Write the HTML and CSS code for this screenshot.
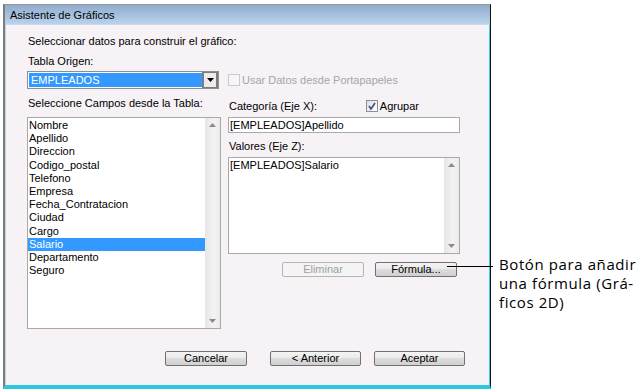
FILE: index.html
```html
<!DOCTYPE html>
<html lang="es">
<head>
  <meta charset="UTF-8" />
  <title>Asistente de Gráficos</title>
  <link rel="stylesheet" href="styles.css">
</head>
<body>
  <div class="stage">
    <div class="window">
      <div class="titlebar">Asistente de Gráficos</div>
      <div class="content">
        <p class="lbl intro">Seleccionar datos para construir el gráfico:</p>
        <p class="lbl origin">Tabla Origen:</p>
        <div class="source-row">
          <div class="combo">
            <span class="combo-value">EMPLEADOS</span>
            <span class="combo-btn">
              <svg width="7" height="4" viewBox="0 0 7 4"><path d="M0 0h7L3.5 4z" fill="#000"/></svg>
            </span>
          </div>
          <label class="check disabled"><span class="box"></span>Usar Datos desde Portapapeles</label>
        </div>

        <div class="main">
          <div class="col-left">
            <p class="lbl">Seleccione Campos desde la Tabla:</p>
            <div class="listbox fields">
              <ul class="items">
                <li>Nombre</li>
                <li>Apellido</li>
                <li>Direccion</li>
                <li>Codigo_postal</li>
                <li>Telefono</li>
                <li>Empresa</li>
                <li>Fecha_Contratacion</li>
                <li>Ciudad</li>
                <li>Cargo</li>
                <li class="selected">Salario</li>
                <li>Departamento</li>
                <li>Seguro</li>
              </ul>
              <div class="vscroll">
                <svg width="7" height="4" viewBox="0 0 7 4"><path d="M0 4h7L3.5 0z" fill="#8a8a8a"/></svg>
                <svg width="7" height="4" viewBox="0 0 7 4"><path d="M0 0h7L3.5 4z" fill="#8a8a8a"/></svg>
              </div>
            </div>
          </div>

          <div class="col-right">
            <div class="cat-row">
              <span class="lbl">Categoría (Eje X):</span>
              <label class="check">
                <span class="box checked">
                  <svg width="10" height="10" viewBox="0 0 10 10"><path d="M2 5l2 3 4-6" fill="none" stroke="#3b4f8c" stroke-width="1.6"/></svg>
                </span>Agrupar
              </label>
            </div>
            <div class="textbox">[EMPLEADOS]Apellido</div>
            <p class="lbl values-lbl">Valores (Eje Z):</p>
            <div class="listbox values">
              <ul class="items">
                <li>[EMPLEADOS]Salario</li>
              </ul>
              <div class="vscroll">
                <svg width="7" height="4" viewBox="0 0 7 4"><path d="M0 4h7L3.5 0z" fill="#8a8a8a"/></svg>
                <svg width="7" height="4" viewBox="0 0 7 4"><path d="M0 0h7L3.5 4z" fill="#8a8a8a"/></svg>
              </div>
            </div>
            <div class="btn-row">
              <button class="btn" disabled>Eliminar</button>
              <button class="btn formula">Fórmula...</button>
            </div>
          </div>
        </div>

        <div class="footer-btns">
          <button class="btn small">Cancelar</button>
          <button class="btn">&lt; Anterior</button>
          <button class="btn">Aceptar</button>
        </div>
      </div>
    </div>

    <p class="callout">Botón para añadir<br>una fórmula (Grá-<br>ficos 2D)</p>
    <div class="leader"></div>
  </div>
</body>
</html>
```

FILE: styles.css
```css
* {
  box-sizing: border-box;
}

body {
  margin: 0;
  background: #fff;
  font-family: 'Liberation Sans', Arial, sans-serif;
  font-size: 11px;
  color: #000;
}

p {
  margin: 0;
}

.stage {
  position: relative;
  display: flex;
  align-items: flex-start;
  width: 642px;
  height: 389px;
  overflow: hidden;
}

.window {
  width: 488px;
  height: 385px;
  margin: 4px 0 0 3px;
  background: #f6f2f5;
  border-top: 1px solid #9a9a9a;
  border-left: 2px solid #7c7c7c;
  border-right: 1px solid #111;
  border-bottom: 4px solid #2cc8e2;
  box-shadow: inset 1px 0 #bcd4f0, inset -1px 0 #3dd0e8;
}

.titlebar {
  height: 20px;
  line-height: 20px;
  padding-left: 5px;
  font-size: 11px;
  background: linear-gradient(#8fadce, #bad2eb);
  border-bottom: 1px solid #c9d9ea;
}

.content {
  padding: 10px 0 0 22px;
}

.lbl {
  line-height: 13px;
  padding-left: 1px;
}

.origin {
  margin-top: 7px;
}

.source-row {
  display: flex;
  align-items: center;
  gap: 9px;
  margin-top: 3px;
}

.combo {
  display: flex;
  width: 192px;
  height: 18px;
  border: 1px solid #8e8f8f;
  background: #fff;
}

.combo-value {
  flex: 1;
  margin: 1px 0 1px 1px;
  padding-left: 2px;
  line-height: 14px;
  background: #3399ff;
  color: #fff;
}

.combo-btn {
  width: 16px;
  display: flex;
  align-items: center;
  justify-content: center;
  background: #ececec;
  border: 2px solid #7d7d7d;
  border-top-width: 1px;
  border-bottom-width: 1px;
}

.check {
  display: flex;
  align-items: center;
  gap: 2px;
}

.check .box {
  width: 12px;
  height: 12px;
  border: 1px solid #8f8f8f;
  background: linear-gradient(135deg, #dcdcdc, #fff);
  display: flex;
  align-items: center;
  justify-content: center;
}

.check.disabled {
  color: #a6a6a6;
}

.check.disabled .box {
  border-color: #cacaca;
  background: #f6f6f6;
}

.main {
  display: grid;
  grid-template-columns: 194px 232px;
  column-gap: 7px;
  margin-top: 8px;
}

.listbox {
  display: flex;
  background: #fff;
  border: 1px solid #a9a9a9;
}

.fields {
  height: 212px;
  margin-top: 7px;
}

.items {
  flex: 1;
  list-style: none;
  margin: 0;
  padding: 1px 0 0;
}

.items li {
  height: 13.2px;
  line-height: 13px;
  padding-left: 1px;
}

.items li.selected {
  background: #3399ff;
  color: #fff;
}

.vscroll {
  width: 15px;
  display: flex;
  flex-direction: column;
  align-items: center;
  justify-content: space-between;
  padding: 5px 0 5px;
  background: linear-gradient(to right, #e6e6e6, #f3f3f3 60%, #ebebeb);
}

.cat-row {
  display: flex;
  align-items: flex-start;
  justify-content: space-between;
  height: 20px;
  padding: 3px 41px 0 0;
}

.textbox {
  height: 16px;
  line-height: 14px;
  padding-left: 1px;
  background: #fff;
  border: 1px solid #a9a9a9;
}

.values-lbl {
  margin-top: 7px;
}

.values {
  height: 97px;
  margin-top: 4px;
}

.btn-row {
  display: flex;
  justify-content: flex-end;
  gap: 11px;
  margin: 8px 3px 0 0;
}

.btn {
  width: 91px;
  height: 15px;
  padding: 0;
  font: 11px 'Liberation Sans', Arial, sans-serif;
  line-height: 13px;
  color: #000;
  border: 1px solid #707070;
  border-radius: 2px;
  background: linear-gradient(#f4f4f4 0%, #ebebeb 45%, #dddddd 50%, #d0d0d0 100%);
}

.btn-row .btn {
  width: 82px;
}

.btn:disabled {
  color: #a0a0a0;
  border-color: #b5b5b5;
  background: #f4f4f4;
}

.footer-btns {
  display: flex;
  gap: 13px;
  margin: 22px 0 0 138px;
}

.footer-btns .small {
  width: 82px;
  margin-right: 10px;
}

.callout {
  margin: 255px 0 0 8px;
  font-family: 'Open Sans', sans-serif;
  font-size: 15px;
  letter-spacing: 0.6px;
  line-height: 19px;
  color: #000;
}

.leader {
  position: absolute;
  left: 447px;
  top: 266px;
  width: 46px;
  height: 1px;
  background: #000;
}
```
